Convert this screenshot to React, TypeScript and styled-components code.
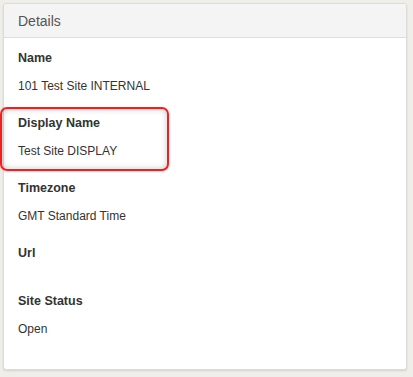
import React from "react";
import styled, { createGlobalStyle } from "styled-components";

const GlobalStyle = createGlobalStyle`
  html, body {
    margin: 0;
    padding: 0;
    background: #efeee9;
  }
  body {
    font-family: "Liberation Sans", Arial, Helvetica, sans-serif;
    color: #333;
  }
`;

const Page = styled.div`
  padding: 3px 6px 6px 3px;
`;

const Card = styled.section`
  width: 402px;
  height: 365px;
  background: #fff;
  border: 1px solid #dcdcdc;
  border-radius: 3px;
  box-shadow: 0 1px 2px rgba(0, 0, 0, 0.12);
  display: flex;
  flex-direction: column;
`;

const CardHeader = styled.header`
  height: 33px;
  display: flex;
  align-items: center;
  padding: 0 14px;
  background: #f4f4f4;
  border-bottom: 1px solid #dddddd;
  border-radius: 3px 3px 0 0;
  font-size: 14px;
  color: #555;
`;

const CardBody = styled.dl`
  margin: 0;
  padding: 10px 14px 0;
  display: flex;
  flex-direction: column;
`;

const Item = styled.div<{ $highlight?: boolean }>`
  position: relative;
  display: flex;
  flex-direction: column;

  ${(p) =>
    p.$highlight &&
    `
    &::before {
      content: "";
      position: absolute;
      left: -18px;
      top: -6px;
      width: 169px;
      height: 64px;
      box-sizing: border-box;
      border: 2px solid #ff1a1a;
      border-radius: 7px;
      box-shadow: inset 0 0 6px rgba(0, 0, 0, 0.22), 0 0 3px rgba(0, 0, 0, 0.12);
      pointer-events: none;
    }
  `}
`;

const Label = styled.dt`
  font-weight: bold;
  font-size: 12.5px;
  line-height: 20px;
  margin: 0 0 8px;
  color: #333;
`;

const Value = styled.dd`
  margin: 0 0 17px;
  font-size: 12px;
  line-height: 20px;
  min-height: 3px;
  color: #333;
`;

const fields: { label: string; value: string; highlight?: boolean }[] = [
  { label: "Name", value: "101 Test Site INTERNAL" },
  { label: "Display Name", value: "Test Site DISPLAY", highlight: true },
  { label: "Timezone", value: "GMT Standard Time" },
  { label: "Url", value: "" },
  { label: "Site Status", value: "Open" },
];

export default function App() {
  return (
    <>
      <GlobalStyle />
      <Page>
        <Card>
          <CardHeader>Details</CardHeader>
          <CardBody>
            {fields.map((f) => (
              <Item key={f.label} $highlight={f.highlight}>
                <Label>{f.label}</Label>
                <Value>{f.value}</Value>
              </Item>
            ))}
          </CardBody>
        </Card>
      </Page>
    </>
  );
}
